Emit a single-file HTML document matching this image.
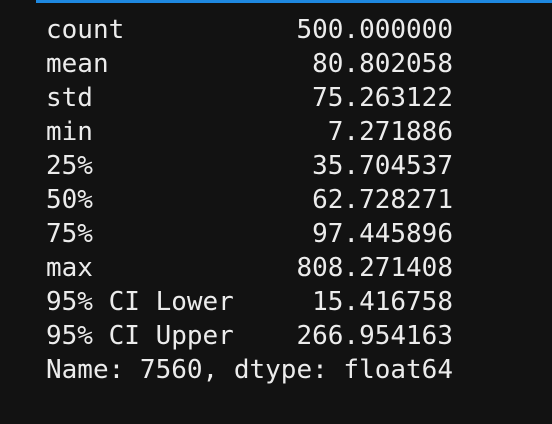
<!DOCTYPE html>
<html><head><meta charset="utf-8"><style>
html,body{margin:0;padding:0;width:552px;height:424px;overflow:hidden;background:#121212;}
.bar{position:absolute;left:36px;top:0;width:516px;height:3px;background:#1e88e0;}
pre{position:absolute;left:46px;top:13px;margin:0;font-family:"DejaVu Sans Mono","Liberation Mono",monospace;font-size:26px;line-height:34px;color:#ececec;}
</style></head><body>
<div class="bar"></div>
<pre>count           500.000000
mean             80.802058
std              75.263122
min               7.271886
25%              35.704537
50%              62.728271
75%              97.445896
max             808.271408
95% CI Lower     15.416758
95% CI Upper    266.954163
Name: 7560, dtype: float64</pre>
</body></html>
